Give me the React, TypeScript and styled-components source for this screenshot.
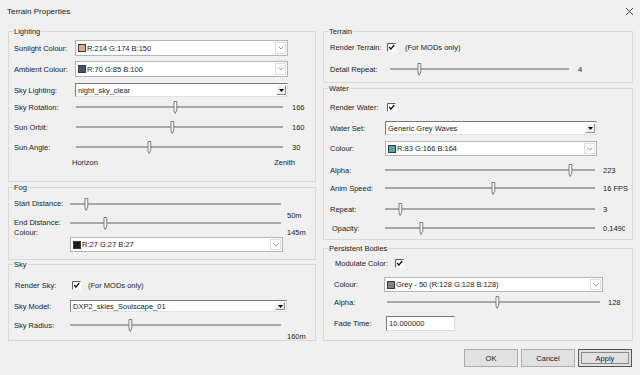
import styled, { createGlobalStyle, css } from "styled-components";

const GlobalStyle = createGlobalStyle`
    html, body {
        margin: 0;
        padding: 0;
        background: #f0f0f0;
    }
    body {
        font-family: "Liberation Sans", Arial, sans-serif;
        font-size: 7.5px;
        color: #1b1b1b;
    }
    * {
        box-sizing: border-box;
    }
`

const Dialog = styled.div`
    width: 640px;
    height: 375px;
    background: #f0f0f0;
    display: flex;
    flex-direction: column;
    overflow: hidden;
`

const TitleBar = styled.div`
    height: 22px;
    display: flex;
    align-items: center;
    justify-content: space-between;
    padding: 0 6px 0 7px;
`

const Title = styled.span`
    font-size: 8px;
    color: #222;
`

const Body = styled.div`
    display: grid;
    grid-template-columns: 308px 310px;
    column-gap: 7px;
    padding: 9px 0 0 8px;
`

const Column = styled.div`
    display: flex;
    flex-direction: column;
`

const Group = styled.div<{ $h: number; $mt?: number; $pt: number; $pl: number }>`
    position: relative;
    height: ${p => p.$h}px;
    margin-top: ${p => p.$mt ?? 0}px;
    padding: ${p => p.$pt}px 0 0 ${p => p.$pl}px;
    border: 1px solid #d9d9d9;
    display: flex;
    flex-direction: column;
`

const Legend = styled.span`
    position: absolute;
    top: -5px;
    left: 4px;
    padding: 0 1px;
    line-height: 9px;
    background: #f0f0f0;
`

const Row = styled.div<{ $h: number; $mt?: number; $cols: string }>`
    display: grid;
    grid-template-columns: ${p => p.$cols};
    align-items: center;
    height: ${p => p.$h}px;
    margin-top: ${p => p.$mt ?? 0}px;
`

const Label = styled.span<{ $pl?: number }>`
    white-space: nowrap;
    line-height: 9px;
    padding-left: ${p => p.$pl ?? 0}px;
`

const Value = styled.span<{ $ml: number; $clip?: number }>`
    white-space: nowrap;
    line-height: 9px;
    margin-left: ${p => p.$ml}px;
    ${p => p.$clip && css`
        width: ${p.$clip}px;
        overflow: hidden;
    `}
`

const RangeLabels = styled.div`
    grid-column: 2 / 4;
    width: 223px;
    margin-left: -3px;
    display: flex;
    justify-content: space-between;
    line-height: 9px;
`

const CheckCell = styled.div<{ $ml: number; $gap: number }>`
    display: flex;
    align-items: center;
    gap: ${p => p.$gap}px;
    margin-left: ${p => p.$ml}px;
    line-height: 9px;
    white-space: nowrap;
`

const ComboBox = styled.div<{ $w: number; $h: number; $dark?: boolean }>`
    width: ${p => p.$w}px;
    height: ${p => p.$h}px;
    background: #fff;
    border: 1px solid #b4b4b4;
    display: flex;
    align-items: center;
    padding-left: 2px;
    ${p => p.$dark && css`
        border-color: #7a7a7a #e2e2e2 #e2e2e2 #7a7a7a;
    `}
`

const ComboText = styled.span`
    flex: 1;
    white-space: nowrap;
    line-height: 9px;
`

const Swatch = styled.span<{ $c: string }>`
    width: 8px;
    height: 8px;
    margin-right: 1px;
    background: ${p => p.$c};
    border: 1px solid #3a3a3a;
`

const ChevronBox = styled.span`
    align-self: stretch;
    width: 11px;
    margin: 1px;
    border: 1px solid #dcdcdc;
    display: flex;
    align-items: center;
    justify-content: center;
`

const DropButton = styled.span`
    align-self: stretch;
    width: 10px;
    margin: 1px;
    background: #f0f0f0;
    border: 1px solid;
    border-color: #fff #8a8a8a #8a8a8a #fff;
    display: flex;
    align-items: center;
    justify-content: center;
`

const SliderBox = styled.div<{ $pl: number }>`
    padding-left: ${p => p.$pl}px;
    display: flex;
    align-items: center;
`

const Track = styled.div<{ $w: number }>`
    position: relative;
    width: ${p => p.$w}px;
    height: 2px;
    background: #a8a8a8;
`

const Thumb = styled.svg`
    position: absolute;
    top: -5px;
    margin-left: -2px;
    width: 5px;
    height: 13px;
`

const TextInput = styled.input`
    width: 69px;
    height: 15px;
    margin-left: 2px;
    padding: 0 0 0 2px;
    font: inherit;
    color: #1b1b1b;
    background: #fff;
    border: 1px solid;
    border-color: #7a7a7a #dcdcdc #dcdcdc #7a7a7a;
    outline: none;
`

const Footer = styled.div`
    display: flex;
    justify-content: flex-end;
    gap: 3px;
    padding: 8px 8px 0 0;
`

const Button = styled.button<{ $default?: boolean }>`
    width: 54px;
    height: 18px;
    padding: 0;
    font: inherit;
    color: #1b1b1b;
    background: #e1e1e1;
    border: 1px solid #adadad;
    ${p => p.$default && css`
        border-color: #555;
        box-shadow: inset 0 0 0 2px #e1e1e1, inset 0 0 0 3px #8a8a8a;
    `}
`

const CheckSvg = styled.svg`
    width: 9px;
    height: 9px;
    flex: none;
`

const Check = () => (
    <CheckSvg viewBox="0 0 9 9">
        <rect x="0" y="0" width="9" height="9" fill="#fff"/>
        <path d="M0.5 8.5 V0.5 H8.5" stroke="#5f5f5f" fill="none"/>
        <path d="M2.2 3.8 L3.8 6.2 L7.2 2" stroke="#111" strokeWidth={1.3} fill="none"/>
    </CheckSvg>
)

const CloseIcon = () => (
    <svg width="9" height="9" viewBox="0 0 9 9">
        <path d="M1 1 L8 8 M8 1 L1 8" stroke="#333" strokeWidth={0.9}/>
    </svg>
)

type ColourProps = { color: string, text: string, w: number, h: number }

const ColourCombo = ({color, text, w, h}: ColourProps) => (
    <ComboBox $w={w} $h={h}>
        <Swatch $c={color}/>
        <ComboText>{text}</ComboText>
        <ChevronBox>
            <svg width="6" height="4" viewBox="0 0 6 4">
                <path d="M0.5 0.5 L3 3 L5.5 0.5" stroke="#a0a0a0" fill="none"/>
            </svg>
        </ChevronBox>
    </ComboBox>
)

const DropCombo = ({text, w, h}: { text: string, w: number, h: number }) => (
    <ComboBox $w={w} $h={h} $dark>
        <ComboText>{text}</ComboText>
        <DropButton>
            <svg width="5" height="3" viewBox="0 0 5 3">
                <path d="M0 0 H5 L2.5 3 Z" fill="#000"/>
            </svg>
        </DropButton>
    </ComboBox>
)

const Slider = ({w, pos, pl = 0}: { w: number, pos: number, pl?: number }) => (
    <SliderBox $pl={pl}>
        <Track $w={w}>
            <Thumb viewBox="0 0 5 13" style={{left: `${pos * 100}%`}}>
                <path d="M1 0.5 H3.8 V9 L2.2 12.5 L1 10 Z" fill="#fcfcfc" stroke="#6f6f6f" strokeWidth={0.9}/>
            </Thumb>
        </Track>
    </SliderBox>
)

const App = () => {
    return <>
        <GlobalStyle/>
        <Dialog>
            <TitleBar>
                <Title>Terrain Properties</Title>
                <CloseIcon/>
            </TitleBar>
            <Body>
                <Column>
                    <Group $h={151} $pt={8} $pl={5}>
                        <Legend>Lighting</Legend>
                        <Row $h={16} $cols="61px 213px auto">
                            <Label>Sunlight Colour:</Label>
                            <ColourCombo color="rgb(214,174,150)" text="R:214 G:174 B:150" w={213} h={16}/>
                        </Row>
                        <Row $h={16} $mt={5} $cols="61px 213px auto">
                            <Label>Ambient Colour:</Label>
                            <ColourCombo color="rgb(70,85,100)" text="R:70 G:85 B:100" w={213} h={16}/>
                        </Row>
                        <Row $h={14} $mt={6} $cols="61px 213px auto">
                            <Label>Sky Lighting:</Label>
                            <DropCombo text="night_sky_clear" w={213} h={14}/>
                        </Row>
                        <Row $h={14} $mt={3} $cols="61px 213px auto">
                            <Label>Sky Rotation:</Label>
                            <Slider w={207} pos={0.478} pl={1}/>
                            <Value $ml={4}>166</Value>
                        </Row>
                        <Row $h={14} $mt={6} $cols="61px 213px auto">
                            <Label>Sun Orbit:</Label>
                            <Slider w={207} pos={0.464} pl={1}/>
                            <Value $ml={4}>160</Value>
                        </Row>
                        <Row $h={14} $mt={6} $cols="61px 213px auto">
                            <Label>Sun Angle:</Label>
                            <Slider w={207} pos={0.353} pl={1}/>
                            <Value $ml={4}>30</Value>
                        </Row>
                        <Row $h={10} $mt={3} $cols="61px 213px auto">
                            <span/>
                            <RangeLabels>
                                <span>Horizon</span>
                                <span>Zenith</span>
                            </RangeLabels>
                        </Row>
                    </Group>

                    <Group $h={73} $mt={5} $pt={8} $pl={5}>
                        <Legend>Fog</Legend>
                        <Row $h={15} $cols="56px 213px auto">
                            <Label>Start Distance:</Label>
                            <Slider w={211} pos={0.076}/>
                        </Row>
                        <Row $h={6} $cols="56px 213px auto">
                            <span/>
                            <span/>
                            <Value $ml={4}>50m</Value>
                        </Row>
                        <Row $h={11} $cols="56px 213px auto">
                            <Label>End Distance:</Label>
                            <Slider w={211} pos={0.166}/>
                        </Row>
                        <Row $h={9} $cols="56px 213px auto">
                            <Label>Colour:</Label>
                            <span/>
                            <Value $ml={4}>145m</Value>
                        </Row>
                        <Row $h={15} $cols="56px 213px auto">
                            <span/>
                            <ColourCombo color="rgb(27,27,27)" text="R:27 G:27 B:27" w={213} h={15}/>
                        </Row>
                    </Group>

                    <Group $h={77} $mt={4} $pt={13} $pl={5}>
                        <Legend>Sky</Legend>
                        <Row $h={14} $cols="56px auto">
                            <Label $pl={1}>Render Sky:</Label>
                            <CheckCell $ml={2} $gap={7}>
                                <Check/>
                                <span>(For MODs only)</span>
                            </CheckCell>
                        </Row>
                        <Row $h={12} $mt={8} $cols="56px 213px auto">
                            <Label>Sky Model:</Label>
                            <DropCombo text="DXP2_skies_Soulscape_01" w={217} h={12}/>
                        </Row>
                        <Row $h={14} $mt={6} $cols="56px 213px auto">
                            <Label>Sky Radius:</Label>
                            <Slider w={211} pos={0.284}/>
                        </Row>
                        <Row $h={8} $cols="56px 213px auto">
                            <span/>
                            <span/>
                            <Value $ml={4}>160m</Value>
                        </Row>
                    </Group>
                </Column>

                <Column>
                    <Group $h={52} $pt={8} $pl={6}>
                        <Legend>Terrain</Legend>
                        <Row $h={14} $cols="57px auto">
                            <Label>Render Terrain:</Label>
                            <CheckCell $ml={0} $gap={9}>
                                <Check/>
                                <span>(For MODs only)</span>
                            </CheckCell>
                        </Row>
                        <Row $h={14} $mt={8} $cols="60px 179px auto">
                            <Label>Detail Repeat:</Label>
                            <Slider w={179} pos={0.162}/>
                            <Value $ml={9}>4</Value>
                        </Row>
                    </Group>

                    <Group $h={152} $mt={5} $pt={11} $pl={6}>
                        <Legend>Water</Legend>
                        <Row $h={14} $cols="55px auto">
                            <Label>Render Water:</Label>
                            <CheckCell $ml={2} $gap={0}>
                                <Check/>
                            </CheckCell>
                        </Row>
                        <Row $h={14} $mt={7} $cols="55px 212px auto">
                            <Label>Water Set:</Label>
                            <DropCombo text="Generic Grey Waves" w={212} h={14}/>
                        </Row>
                        <Row $h={15} $mt={6} $cols="55px 212px auto">
                            <Label>Colour:</Label>
                            <ColourCombo color="rgb(83,166,164)" text="R:83 G:166 B:164" w={212} h={15}/>
                        </Row>
                        <Row $h={14} $mt={7} $cols="55px 212px auto">
                            <Label>Alpha:</Label>
                            <Slider w={210} pos={0.88}/>
                            <Value $ml={6}>223</Value>
                        </Row>
                        <Row $h={14} $mt={4} $cols="55px 212px auto">
                            <Label>Anim Speed:</Label>
                            <Slider w={210} pos={0.514}/>
                            <Value $ml={6}>16 FPS</Value>
                        </Row>
                        <Row $h={14} $mt={7} $cols="55px 212px auto">
                            <Label>Repeat:</Label>
                            <Slider w={210} pos={0.071}/>
                            <Value $ml={6}>3</Value>
                        </Row>
                        <Row $h={14} $mt={5} $cols="55px 212px auto">
                            <Label $pl={2}>Opacity:</Label>
                            <Slider w={210} pos={0.171}/>
                            <Value $ml={6} $clip={22}>0.1490</Value>
                        </Row>
                    </Group>

                    <Group $h={93} $mt={8} $pt={8} $pl={10}>
                        <Legend>Persistent Bodies</Legend>
                        <Row $h={12} $cols="61px auto">
                            <Label $pl={1}>Modulate Color:</Label>
                            <CheckCell $ml={0} $gap={0}>
                                <Check/>
                            </CheckCell>
                        </Row>
                        <Row $h={15} $mt={8} $cols="50px 219px auto">
                            <Label>Colour:</Label>
                            <ColourCombo color="rgb(128,128,128)" text="Grey - 50 (R:128 G:128 B:128)" w={219} h={15}/>
                        </Row>
                        <Row $h={14} $mt={3} $cols="50px 219px auto">
                            <Label>Alpha:</Label>
                            <Slider w={213} pos={0.516} pl={3}/>
                            <Value $ml={5}>128</Value>
                        </Row>
                        <Row $h={15} $mt={7} $cols="50px auto">
                            <Label>Fade Time:</Label>
                            <TextInput readOnly value="10.000000"/>
                        </Row>
                    </Group>
                </Column>
            </Body>
            <Footer>
                <Button>OK</Button>
                <Button>Cancel</Button>
                <Button $default>Apply</Button>
            </Footer>
        </Dialog>
    </>
}

export default App
